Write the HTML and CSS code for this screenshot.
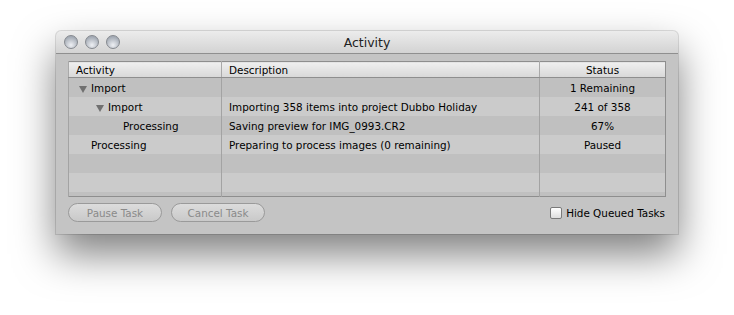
FILE: index.html
```html
<!DOCTYPE html>
<html lang="en">
<head>
  <meta charset="UTF-8">
  <title>Activity</title>
  <link rel="stylesheet" href="styles.css">
</head>
<body>
  <div class="window">
    <div class="titlebar">
      <div class="lights">
        <span class="light"></span>
        <span class="light"></span>
        <span class="light"></span>
      </div>
      <div class="title">Activity</div>
    </div>

    <div class="content">
      <table class="tasks">
        <thead>
          <tr>
            <th class="col-activity">Activity</th>
            <th class="col-desc">Description</th>
            <th class="col-status">Status</th>
          </tr>
        </thead>
        <tbody>
          <tr>
            <td class="lvl-0"><span class="arrow"></span>Import</td>
            <td></td>
            <td class="status">1 Remaining</td>
          </tr>
          <tr>
            <td class="lvl-1"><span class="arrow"></span>Import</td>
            <td>Importing 358 items into project Dubbo Holiday</td>
            <td class="status">241 of 358</td>
          </tr>
          <tr>
            <td class="lvl-2">Processing</td>
            <td>Saving preview for IMG_0993.CR2</td>
            <td class="status">67%</td>
          </tr>
          <tr>
            <td class="lvl-0b">Processing</td>
            <td>Preparing to process images (0 remaining)</td>
            <td class="status">Paused</td>
          </tr>
          <tr><td></td><td></td><td></td></tr>
          <tr><td></td><td></td><td></td></tr>
          <tr class="stub"><td></td><td></td><td></td></tr>
        </tbody>
      </table>

      <div class="footer">
        <button class="btn" disabled>Pause Task</button>
        <button class="btn" disabled>Cancel Task</button>
        <label class="check"><span class="box"></span>Hide Queued Tasks</label>
      </div>
    </div>
  </div>
</body>
</html>
```

FILE: styles.css
```css
html, body {
  height: 100%;
}

body {
  margin: 0;
  padding-top: 31px;
  box-sizing: border-box;
  background-color: #ffffff;
  font-family: 'DejaVu Sans', 'Liberation Sans', sans-serif;
  font-size: 10.4px;
  color: #000000;
}

.window {
  margin-left: 56px;
  width: 622px;
  height: 203px;
  background-color: #c4c4c4;
  border-radius: 5px 5px 0 0;
  box-shadow: 0 0 0 1px rgba(0, 0, 0, 0.12), 0 20px 40px rgba(0, 0, 0, 0.5);
}

.titlebar {
  height: 22px;
  display: flex;
  align-items: center;
  position: relative;
  border-radius: 5px 5px 0 0;
  background: linear-gradient(#ececec, #d3d3d3);
  border-bottom: 1px solid #8f8f8f;
}

.lights {
  display: flex;
  gap: 7px;
  padding-left: 8px;
}

.light {
  width: 12px;
  height: 12px;
  border-radius: 50%;
  border: 1px solid #85898f;
  background: radial-gradient(circle at 50% 75%, #eef0f4, #a3aab4 75%);
}

.title {
  position: absolute;
  left: 0;
  right: 0;
  top: 4px;
  text-align: center;
  font-size: 12.5px;
  color: #222222;
  pointer-events: none;
}

.content {
  padding: 7px 12px 0 12px;
}

.tasks {
  width: 598px;
  border-collapse: collapse;
  table-layout: fixed;
  border: 1px solid #8e8e8e;
}

.tasks th {
  height: 15px;
  padding: 0 7px;
  font-weight: normal;
  text-align: left;
  background: linear-gradient(#efefef, #d8d8d8);
  border-bottom: 1px solid #8e8e8e;
  border-left: 1px solid #a9a9a9;
}

.col-activity {
  width: 138px;
}

.col-desc {
  width: 303px;
}

.tasks th.col-status {
  text-align: center;
}

.tasks td {
  height: 19px;
  padding: 1px 7px 0 7px;
  box-sizing: border-box;
  border-left: 1px solid #a3a3a3;
  white-space: nowrap;
  overflow: hidden;
}

.tasks tbody tr:nth-child(odd) td {
  background-color: #c0c0c0;
}

.tasks tbody tr:nth-child(even) td {
  background-color: #cbcbcb;
}

.tasks tr.stub td {
  height: 5px;
  padding: 0;
}

.tasks td.status {
  text-align: center;
}

.lvl-0 {
  padding-left: 10px !important;
}

.lvl-1 {
  padding-left: 27px !important;
}

.lvl-2 {
  padding-left: 54px !important;
}

.lvl-0b {
  padding-left: 22px !important;
}

.arrow {
  display: inline-block;
  width: 0;
  height: 0;
  border-left: 4px solid transparent;
  border-right: 4px solid transparent;
  border-top: 7px solid #707070;
  margin-right: 4px;
  vertical-align: -1px;
}

.footer {
  display: flex;
  align-items: center;
  gap: 9px;
  padding-top: 6px;
}

.btn {
  height: 19px;
  width: 94px;
  padding: 0;
  border: 1px solid #9a9a9a;
  border-radius: 10px;
  background: linear-gradient(#dcdcdc, #c9c9c9);
  font-family: 'DejaVu Sans', 'Liberation Sans', sans-serif;
  font-size: 10.4px;
  color: #8a8a8a;
}

.check {
  margin-left: auto;
  display: flex;
  align-items: center;
  gap: 4px;
  margin-right: 1px;
}

.box {
  width: 10px;
  height: 10px;
  border: 1px solid #7a7a7a;
  border-radius: 2px;
  background: linear-gradient(#ffffff, #dedede);
}
```
